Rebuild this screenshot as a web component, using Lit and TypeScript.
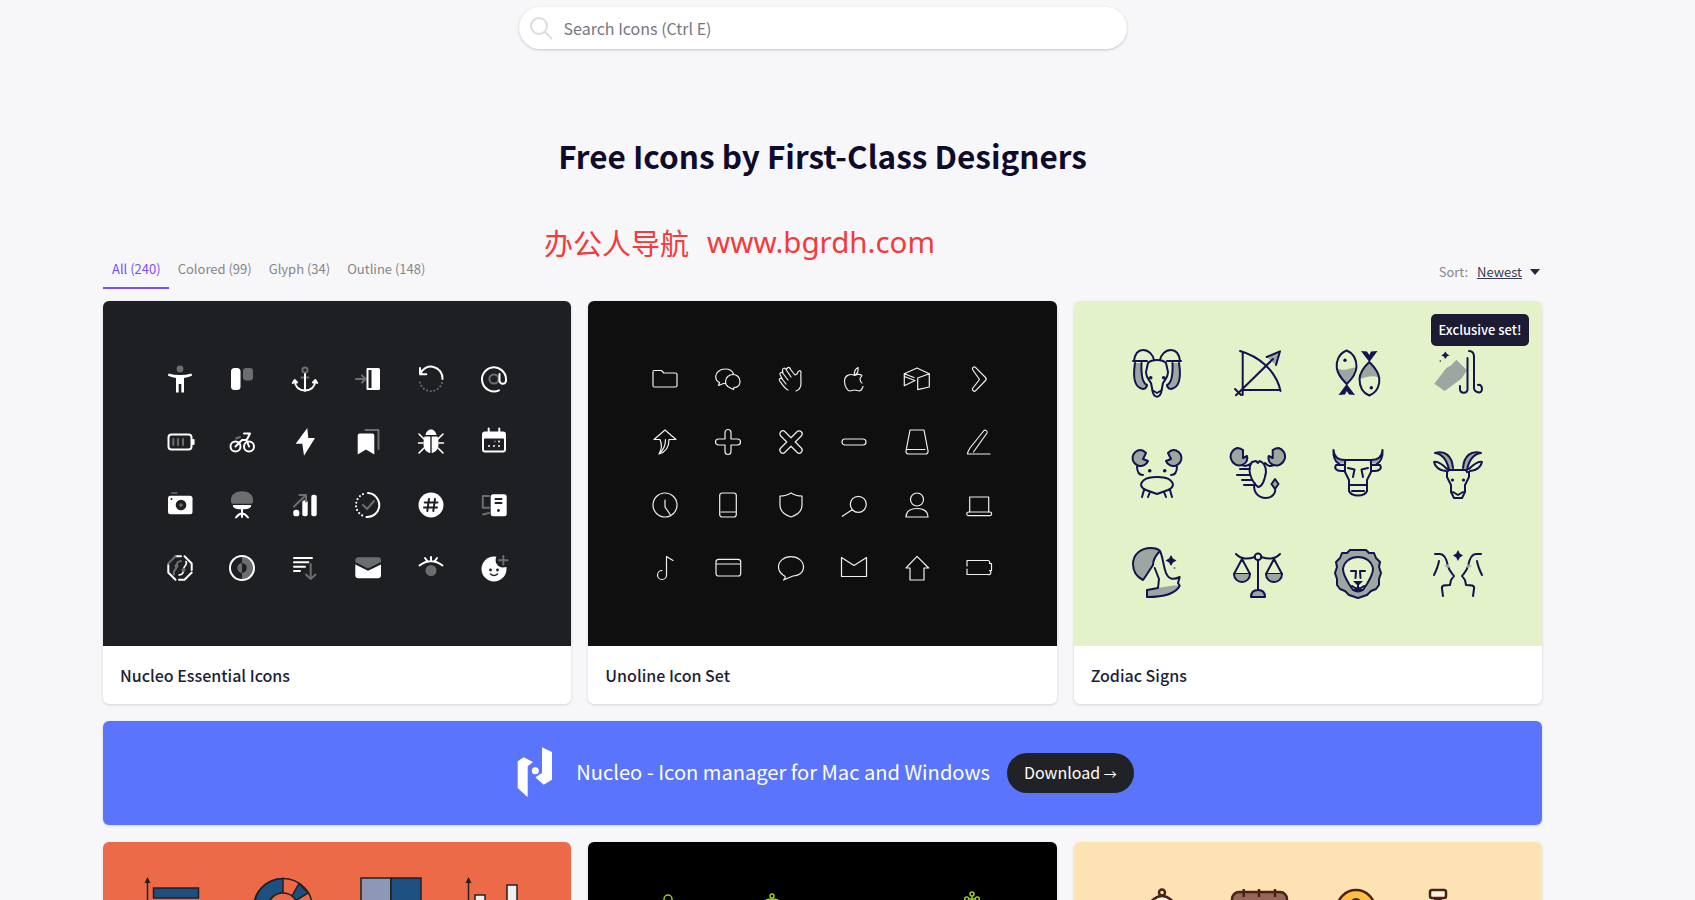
import { LitElement, html, css, svg } from "lit";
import { customElement } from "lit/decorators.js";

const essential = [
  svg`<circle class="gf" cx="13" cy="3" r="3.4"/><path class="wf" d="M1.5 7.5Q13 10.5 24.5 7.5L25 9.8Q20 11.8 17 12V26.5H14.3V18H11.7V26.5H9V12Q6 11.8 1 9.8Z"/>`,
  svg`<rect class="wf" x="2" y="2" width="9.5" height="22" rx="3.5"/><rect class="gf" x="14" y="2" width="10" height="12.5" rx="3"/>`,
  svg`<circle class="gs" cx="13" cy="4" r="2.6"/><path class="gs" d="M9.5 11.5H16.5"/><path class="ws" d="M13 8V25M2.7 15Q3.5 24 13 24.5Q22.5 24 23.3 15M.8 17L2.7 14L5 16.5M25.2 17L23.3 14L21 16.5"/>`,
  svg`<path class="gs" d="M1 13H10M7 9.5L10.5 13L7 16.5"/><rect class="wf" x="16.5" y="2" width="8.5" height="22" rx="1.5"/><path class="ws" d="M17 3H12.5V23H17" />`,
  svg`<path class="ws" d="M2.3 8A11.5 11.5 0 0 1 24.5 13M2 2V8.3H8.3"/><path class="gs dots" d="M24 17A11.5 11.5 0 0 1 1.5 13.5"/>`,
  svg`<circle class="gs" cx="13" cy="13" r="4.6"/><path class="ws" d="M18 24.3A12 12 0 1 1 25 13V14.5A3 3 0 0 1 18.5 14.5V8"/>`,
  svg`<rect class="ws" x="1.5" y="5.5" width="23" height="15" rx="3"/><rect class="wf" x="25" y="10" width="2.6" height="6" rx="1"/><path class="gs" d="M6.3 10V16M11 10V16M16 10V16"/>`,
  svg`<circle class="ws" cx="6.5" cy="17.5" r="5"/><circle class="ws" cx="20" cy="17.5" r="5"/><path class="ws" d="M6.5 17.5L13 11H17.5L20 17.5M15 4.5H21L18.5 9.5L17 11"/><path class="gs" d="M7 9.5L11 8"/>`,
  svg`<path class="wf" d="M15.3 -1L3.7 14.7H10.3L12 26.7L23 9H16.3Z"/>`,
  svg`<path class="wf" d="M2.7 6.5A2 2 0 0 1 4.7 4.5H17.3A2 2 0 0 1 19.3 6.5V25.5L11 20.5L2.7 25.5Z"/><path class="gs" d="M10.5 1H23.5V20"/>`,
  svg`<path class="wf" d="M13 .5C16 .5 18 3 18.5 6H7.5C8 3 10 .5 13 .5ZM6.5 7.5H12.3V24C8.5 23.5 5.5 20 5.5 15C5.5 12 5.8 9.5 6.5 7.5ZM13.7 7.5H19.5C20.2 9.5 20.5 12 20.5 15C20.5 20 17.5 23.5 13.7 24Z"/><path class="ws thin" d="M1 5L6 10M.5 14H5M1 24L6 19M25 5L20 10M25.5 14H21M25 24L20 19"/>`,
  svg`<path class="wf" d="M4 2.5H22A3 3 0 0 1 25 5.5V20.5A3 3 0 0 1 22 23.5H4A3 3 0 0 1 1 20.5V5.5A3 3 0 0 1 4 2.5Z"/><rect class="bf" x="3" y="9.5" width="20" height="12" rx="1"/><path class="ws" d="M7.7 -.5V3M18.3 -.5V3"/><circle class="gf" cx="14" cy="12.5" r="1"/><circle class="wf" cx="18" cy="12.5" r="1"/><circle class="wf" cx="8" cy="17" r="1"/><circle class="wf" cx="13" cy="17" r="1"/><circle class="wf" cx="18" cy="17" r="1"/>`,
  svg`<rect class="gf" x="4.3" y=".3" width="6" height="1.4"/><rect class="wf" x="1" y="3.8" width="24.5" height="18.5" rx="2.5"/><circle class="bf" cx="14" cy="13" r="5.3"/><circle class="gf" cx="14" cy="13" r="1.8"/><circle class="bf" cx="4.5" cy="7" r="1"/>`,
  svg`<path class="gf" d="M2 10V7.5C2 2.5 7 -.7 13 -.7S24 2.5 24 7.5V10Q24 11.7 22 11.7H4Q2 11.7 2 10Z"/><path class="wf" d="M4.5 13H21.5Q22.5 13 22 14.5Q20 17.3 16 17.3H10Q6 17.3 4 14.5Q3.500 13 4.500 13Z"/><path class="ws" d="M13 17V25M7 25.5Q10 21.500 13 21.500Q16 21.500 19 25.500"/>`,
  svg`<rect class="wf" x="1.3" y="17.7" width="6" height="6.600" rx="2.600"/><rect class="wf" x="10.300" y="8.300" width="5.400" height="16" rx="2"/><rect class="wf" x="19.300" y="2.700" width="5.400" height="21.600" rx="2"/><path class="gs" d="M2 14.500L13.500 3.500M7.500 3H14V9.500"/>`,
  svg`<path class="ws" d="M13 1A12 12 0 0 1 11.500 25"/><path class="ws dots w" d="M8 2.100A12 12 0 0 0 8 23.900"/><path class="gs" d="M8 13L12 17L19 9"/>`,
  svg`<circle class="wf" cx="13" cy="13" r="12.500"/><path class="bs" d="M11 7L9.300 19M17 7L15.300 19M6.700 10.500H19.500M6 15.500H19"/>`,
  svg`<path class="gs" d="M8 4H1.800V15.700H8M2 22.500L8 21"/><rect class="wf" x="9.700" y="2.300" width="16" height="22" rx="2.500"/><path class="bs" d="M14.500 7H20.500M14.500 11H20.500"/><circle class="bf" cx="17.500" cy="18.500" r="1.400"/>`,
  svg`<path class="ws" d="M17.500 1.300L24.700 8.500V15M8.500 1.300H14M1.300 10V17.500L8.500 24.700M12 24.700H17.500L24.700 17.500"/><path class="gs" d="M8.500 1.300L1.300 8.500"/><path class="gs" d="M7 19.500C5 16 9 15.500 9.500 12S9.500 6.500 14 6"/><path class="ws thin" d="M19 6.500C21 10 17 10.500 16.500 14S16.500 19.500 12 20"/><circle class="gf" cx="16.500" cy="15" r="2"/><circle class="gf" cx="9.500" cy="11" r="2"/>`,
  svg`<path class="gf" d="M13 1A12 12 0 0 1 13 25Z"/><circle class="bf" cx="13" cy="13" r="4.800"/><path class="gf" d="M13 8.200A4.800 4.800 0 0 0 13 17.800Z"/><circle class="ws" cx="13" cy="13" r="12"/>`,
  svg`<path class="ws" d="M2 3H20M2 7.300H16.300M2 11.700H13M2 16H8"/><path class="gs" d="M18.700 9V24M14 19.500L18.700 24L23.500 19.500"/>`,
  svg`<path class="gf" d="M.3 7V5A3 3 0 0 1 3.300 2.300H23A3 3 0 0 1 26 5V7L13 13.500Z"/><path class="wf" d="M.3 9.500L13 15.800L26 9.500V20.500A3 3 0 0 1 23 23.300H3.300A3 3 0 0 1 .3 20.500Z"/>`,
  svg`<path class="ws" d="M1.500 10.500Q13 2 24.500 10.500M7 3L9.500 6.500M13 2V5.500M19 3L16.500 6.500"/><circle class="gf" cx="13" cy="15.500" r="5.500"/>`,
  svg`<circle class="wf" cx="13" cy="14" r="12.500"/><circle class="bf" cx="22" cy="5" r="7.500"/><path class="gs" d="M22.300 1V9.500M18 5.200H26.500"/><circle class="bf" cx="9.500" cy="15" r="1.400"/><circle class="bf" cx="16.500" cy="15" r="1.400"/><path class="bs thin" d="M9.500 19Q13 22 16.500 19"/>`,
];

const uno = [
  svg`<path d="M1 6Q1 4.500 2.500 4.500H9.500L11.800 7H23.500Q25 7 25 8.500V19.500Q25 21 23.500 21H2.500Q1 21 1 19.500Z"/>`,
  svg`<path d="M4.500 16.500C2 15.500 .7 13.500 .7 10.500C.7 6.500 5 3 10 3C14 3 17.500 5 18.500 8"/><path d="M4.500 16.500L3.500 19.500L8.500 17.500H10.500M14.500 21.500L18.500 23.500L19 21.500C23 21.500 25 19 25 15.500C25 11.500 22 8.500 18 8.500C14 8.500 10.500 11.500 10.500 15.500C10.500 18.500 12 20.500 14.500 21.500Z"/>`,
  svg`<path d="M10 24C7 23 4 18 1.500 14.500C.5 12.500 3 11.500 4.500 13.500L2 8.500C1.500 6.500 4 5.500 5 7.500L4.500 4C4.500 2 7 1.500 8 3.500L10 1.500C12 1 12.500 3 13 4L17 9L19 8C20 4 23 4 23 6C22.500 10 23 13 23 17C23 21 21 24 18 25M5 7.500L10 14M8 3.500L13 11M4.500 13.500L8 18"/>`,
  svg`<path d="M21 9.500C19 8 16.500 8 13.500 9.500C10 7.500 3.500 8.500 3.500 15.500C3.500 20 6.500 25 9 25C10.500 25 11.500 24 13.500 24C15.500 24 16.500 25 18 25C20 25 21.500 22 22 20.500M21 17C19 16 18 11.500 20.500 10.500M13.500 9C13 6 14.500 3 17 1.500C17.500 5 16.500 8 13.500 9"/>`,
  svg`<path d="M.3 7.700L13 2L25.300 7.700V21L13.700 23.700V12L25.300 7.700M.3 7.700V19.700L11 14.500L.3 10.500M.3 7.700L10 11.500"/>`,
  svg`<path d="M6.500 3.500C6 1.500 8 0 9.500 1.300L19.500 11.500C20.500 12.500 20.500 13.500 19.500 14.500L9.500 24.800C8 26 6 24.500 6.500 22.500L13.500 13.500Z"/>`,
  svg`<path d="M8 10.500H2L13 1L24 10.500H17C17 17 14 23 7 25C10 20 10 15 8 10.500ZM13.500 10.500C13.500 15 13 20 7 25"/>`,
  svg`<path d="M10 3.500A3 3 0 0 1 16 3.500V10H22.500A3 3 0 0 1 22.500 16H16V22.500A3 3 0 0 1 10 22.500V16H3.500A3 3 0 0 1 3.500 10H10Z"/>`,
  svg`<path transform="rotate(45 13 13)" d="M10 1.500A3 3 0 0 1 16 1.500V10H24.500A3 3 0 0 1 24.500 16H16V24.500A3 3 0 0 1 10 24.500V16H1.500A3 3 0 0 1 1.500 10H10Z"/>`,
  svg`<rect x="1" y="10" width="24" height="6" rx="3"/>`,
  svg`<path d="M6 1H20L24 22A2.500 2.500 0 0 1 22 25H4A2.500 2.500 0 0 1 2 22ZM3 20.500H21"/>`,
  svg`<path d="M1.500 24.500C2 22 3 20.500 4 19L18 1.500C19 .5 22 2 21 4L7.500 23M1.500 25H24"/>`,
  svg`<circle cx="13" cy="13" r="12"/><path d="M13 8V15L18.500 23"/>`,
  svg`<rect x="4.700" y="1" width="16.600" height="24" rx="2.500"/><path d="M6 20H21"/>`,
  svg`<path d="M13 1C16 3 20 4 24 4V13C24 19 19 23 13 25C7 23 2 19 2 13V4C6 4 10 3 13 1Z"/>`,
  svg`<circle cx="17.300" cy="12.300" r="8"/><path d="M1.300 24.300L10 18.500H12.500"/>`,
  svg`<circle cx="13" cy="7.500" r="6.500"/><path d="M2 25C2 19 7 16.500 13 16.500C19 16.500 24 19 24 25Z"/>`,
  svg`<path d="M3.700 20V5H22.700V20"/><rect x=".7" y="20" width="25" height="3.600" rx="1.800"/>`,
  svg`<path d="M14.500 1.500V20A4.500 4.500 0 1 1 10 15.500M14.500 1.500L21 5.500"/>`,
  svg`<rect x="1" y="4.300" width="24.700" height="16.700" rx="2.500"/><path d="M1.500 9H25.500"/>`,
  svg`<path d="M5 20C1 17 .5 14 .5 12C.5 6 6 1.700 13 1.700C20 1.700 25.500 6 25.500 12C25.500 18 20 21 15 21L5.500 25C8 23 8 21.500 5 20Z"/>`,
  svg`<path d="M.5 2.500V21.500H25.500V2.500L13 10.500Z"/>`,
  svg`<path d="M13 1.300L24.700 13H20V25H6V13H2Z"/>`,
  svg`<path d="M1 5.500H22A2 2 0 0 1 23.500 8.500H25.500V15.500H23.500A2 2 0 0 1 22 19.500H1V14M1 11V5.500"/>`,
];

const z = [
  svg`<path class="zg" d="M3 15C0 34 5 40 11 41C14 41 15 38 15 37C10 35 9 27 9.500 15ZM47 15C50 34 45 40 39 41C36 41 35 38 35 37C40 35 41 27 40.500 15Z"/><path d="M1 13H15M35 13H49M2 13C3 5 7 2 11 2C17 2 21 7 22 12M48 13C47 5 43 2 39 2C33 2 29 7 28 12M3 15C0 34 5 40 11 41C14 41 15 38 15 37C10 35 9 27 9.500 15M47 15C50 34 45 40 39 41C36 41 35 38 35 37C40 35 41 27 40.500 15M16 15C20 11 30 11 34 15L36 24C36 29 33 32 31 35L29 45C27 50 23 50 21 45L19 35C17 32 14 29 14 24ZM20 42L25 45L30 42"/><circle class="zf" cx="18.700" cy="29.700" r="1.800"/><circle class="zf" cx="31.700" cy="29.700" r="1.800"/>`,
  svg`<path class="zg" d="M33.700 9L47 3.300L43 17Z"/><path d="M7 3C25 8 43 22 47.500 43M9.700 4V47M9.700 42H47M3 47.300L40 11M33.700 9L47 3.300L43 17M2 41L8 47"/>`,
  svg`<path class="zg" d="M3.800 20C10 24 18 20 23.500 19C23 27 18 32 13.700 36C10 32 5 28 3.800 20ZM46.200 30C40 26 32 30 26.500 31C27 23 32 18 36.300 14C40 18 45 22 46.200 30Z"/><path d="M13.700 2.500C5 6 3 14 3.800 20C5 28 10 32 13.700 36C18 32 23 27 23.500 19C23.500 11 20 5 13.700 2.500ZM36.300 47.500C45 44 47 36 46.200 30C45 22 40 18 36.300 14C32 18 27 23 26.500 31C26.500 39 30 45 36.300 47.500Z"/><path class="zf" d="M13.700 36L5.500 47L12 46.500L13.700 43L16 46.500L22 47ZM36.300 14L44.500 3L38 3.500L36.300 7L34 3.500L28 3Z"/><circle class="zf" cx="12" cy="12.300" r="1.700"/><circle class="zf" cx="38.300" cy="39.700" r="1.700"/>`,
  svg`<path class="zg nostroke" d="M1.300 35.700L13.300 20L18 17.500L23.300 11.700L34 22.300L28.300 30.700L11.700 43Z"/><path class="zf" d="M12.300 3.500L14 6L16.500 7.300L14 8.600L12.300 11L10.700 8.600L8.200 7.300L10.700 6Z"/><circle class="zf" cx="7.300" cy="13" r=".8"/><path d="M36 3C40 3 41 6 41 9V40C41 44 49 47 49 41C49 38 47 36 45 37M34.500 10V41C34.500 46 27 46 27 41V38"/>`,
  svg`<path class="zg" d="M8.700 2A8 8 0 1 0 16 13L11 11L14 5C12 3 10 2 8.700 2ZM41.300 2A8 8 0 1 1 34 13L39 11L36 5C38 3 40 2 41.300 2Z"/><path d="M8.700 2A8 8 0 1 0 16 13L11 11L14 5C12 3 10 2 8.700 2ZM41.300 2A8 8 0 1 1 34 13L39 11L36 5C38 3 40 2 41.300 2ZM5 18C5 25 8 27 11 27M45 18C45 25 42 27 39 27M12 32C17 28 33 28 38 32C43 36 41 40 36 42L25 46L14 42C9 40 7 36 12 32ZM12 42L10 49M18 44L16 49M32 44L34 49M38 42L40 49"/><circle class="zf" cx="17.700" cy="22.700" r="1.800"/><circle class="zf" cx="32.700" cy="22.700" r="1.800"/>`,
  svg`<path class="zg" d="M4 0A8.500 8.500 0 0 0 9 17C13 16 15 12 14 8L10 10V2Q7 0 4 0ZM45.700 0A8.500 8.500 0 0 1 40.700 17C36.700 16 34.700 12 35.700 8L39.700 10V2Q42.700 0 45.700 0Z"/><path d="M4 0A8.500 8.500 0 0 0 9 17C13 16 15 12 14 8L10 10V2Q7 0 4 0ZM45.700 0A8.500 8.500 0 0 1 40.700 17C36.700 16 34.700 12 35.700 8L39.700 10V2Q42.700 0 45.700 0ZM9 17C12 19 15 18 18.500 15M40.700 17C37 19 35 18 32 15M19 14C14 20 17 32 25 39C30 39 32 30 33 24C33 18 30 14 26.500 13L25 15L23 13ZM17 21H7M16 27H4M19 32H9M22 37H11M22 35.500C19 43 25 50 33 50C39 50 43 45 42 41"/><path class="zg" d="M42 31L45.500 36L42 41L38.500 36Z"/><path d="M42 31L45.500 36L42 41L38.500 36Z"/>`,
  svg`<path class="zg" d="M.5 2C1 9 5 12 12 12L14 15L6 16C3 13 1 8 .5 2ZM49.500 2C49 9 45 12 38 12L36 15L44 16C47 13 49 8 49.500 2Z"/><path d="M.5 2C1 9 5 12 12 12H38C45 12 49 9 49.500 2M.5 2C0 8 2 14 6 16M49.500 2C50 8 48 14 44 16M12 12V24L16 32V43Q18 47.500 25 47.500Q32 47.500 34 43V32L38 24V12M12 17H3C1 20 3 23 8 23H12M38 17H47C49 20 47 23 42 23H38M15 20L21.500 21.500L20 29M35 20L28.500 21.500L30 29M16 37H34M19 43H31"/>`,
  svg`<path class="zg" d="M20 20C19 8 12 2 2 5C9 6 14 12 16 22ZM30 20C31 8 38 2 48 5C41 6 36 12 34 22Z"/><path d="M20 20C19 8 12 2 2 5C9 6 14 12 16 22M30 20C31 8 38 2 48 5C41 6 36 12 34 22M16 22H34M14 24V29L18 37V44L21 50H29L32 44V37L36 29V24H34L33 22M14 24L16 22M14 21C9 16 4 13 1 14C2 19 7 23 13 23M36 21C41 16 46 13 49 14C48 19 43 23 37 23M20 44L25 47L30 44"/><circle class="zf" cx="19.500" cy="32" r="1.600"/><circle class="zf" cx="30.500" cy="32" r="1.600"/>`,
  svg`<path class="zg" d="M11 31C5 28 1 22 1 15C1 6 8 -1 19 -1C24 -1 26 0 28 2C24 6 21 11 21 16C17 22 14 27 11 31ZM15 41L26 39C32 38 42 36 47.700 36.700C44 44 34 48 15 48Z"/><path d="M11 31C5 28 1 22 1 15C1 6 8 -1 19 -1C24 -1 26 0 28 2C24 6 21 11 21 16C17 22 14 27 11 31ZM28 2C31 8 31 16 34 24C36 29 40 32 47.700 28L46 34L47.700 36.700C44 44 34 48 15 48V41L26 39L27 30L22.700 19"/><path class="zf" d="M39 6L41 9.500L44.500 11.500L41 13.500L39 17L37 13.500L33.500 11.500L37 9.500Z"/><circle class="zf" cx="42.500" cy="19" r=".8"/>`,
  svg`<circle cx="25" cy="7.700" r="3.300"/><path d="M3 5C9 11 15 10 22 8M47 5C41 11 35 10 28 8M25 11V42M9 10L1 25H17ZM41 10L33 25H49Z"/><path class="zg" d="M1 25H17C17 30 13 33 9 33C5 33 1 30 1 25ZM33 25H49C49 30 45 33 41 33C37 33 33 30 33 25ZM18 48C18 43 21 41 25 41C29 41 32 43 32 48Z"/><path d="M1 25C1 30 5 33 9 33C13 33 17 30 17 25M33 25C33 30 37 33 41 33C45 33 49 30 49 25M18 48C18 43 21 41 25 41C29 41 32 43 32 48Z"/>`,
  svg`<path class="zg" d="M25 1L33 1L36 4L41 4L43 9L47 13L46 18L48 24L46 30L46 36L43 40L38 42L34 46L25 48L16 46L12 42L7 40L4 36L4 30L2 24L4 18L3 13L7 9L9 4L14 4L17 1Z"/><path d="M25 1L33 1L36 4L41 4L43 9L47 13L46 18L48 24L46 30L46 36L43 40L38 42L34 46L25 49L16 46L12 42L7 40L4 36L4 30L2 24L4 18L3 13L7 9L9 4L14 4L17 1Z"/><path class="lgf" d="M25 8C18 8 11 12 10 20C10 25 13 30 16 35L20 41H30L34 35C37 30 40 25 40 20C39 12 32 8 25 8Z"/><path d="M25 8C18 8 11 12 10 20C10 25 13 30 16 35L20 41H30L34 35C37 30 40 25 40 20C39 12 32 8 25 8ZM18 22H23L22.500 29M32 22H27L27.500 29M20 41Q25 44 30 41"/><path class="zf" d="M20 32H30L25 37Z"/><path d="M19 37Q25 42 31 37M25 36V39"/>`,
  svg`<path class="zf" d="M25 1L26.800 4.500L30 6.500L26.800 8.500L25 12L23.200 8.500L20 6.500L23.200 4.500Z"/><path d="M2 5H7C12 5 14 12 15 17C16 22 19 24 21 27L18 31L17 36C12 36 8 36 9 40L10 47M1 26C3 22 5 18 6 12M48 5H43C38 5 36 12 35 17C34 22 31 24 29 27L32 31L33 36C38 36 42 36 41 40L40 47M49 26C47 22 45 18 44 12"/><path class="zg nostroke" d="M11 17L16 15V19ZM39 17L34 15V19Z"/>`,
];

const orange = [
  svg`<path class="d1" d="M.500 5V60"/><path class="df" d="M-2.500 6L.500 0L3.500 6Z"/><rect class="n" x="6.500" y="11" width="45" height="10"/><rect class="n" x="6.500" y="32" width="30" height="10"/>`,
  svg`<circle class="or" cx="29" cy="31" r="29.500"/><path class="n" d="M29 1.500A29.500 29.500 0 1 0 52 50L40 41A15 15 0 1 1 29 16Z"/><path class="n" d="M45 6.500L54 16L41 24L38 19Z" /><circle class="or" cx="29" cy="31" r="15"/>`,
  svg`<rect class="lb" x="0" y="1" width="30" height="60"/><rect class="n" x="30" y="1" width="30" height="60"/>`,
  svg`<path class="d1" d="M1.500 5V60"/><path class="df" d="M-1.500 6L1.500 0L4.500 6Z"/><rect class="wb" x="8" y="18" width="10" height="42"/><rect class="wb" x="40" y="8" width="10" height="52"/>`,
];

const lime = [
  svg`<circle class="l" cx="26" cy="9" r="4"/><path class="l" d="M26 13V30"/>`,
  svg`<circle class="l" cx="30" cy="6" r="2"/><path class="l" d="M24 10Q30 8 36 10M30 8V30"/>`,
  svg``,
  svg`<circle class="l" cx="30" cy="4" r="2"/><circle class="l" cx="24.700" cy="9" r="2"/><circle class="l" cx="35.300" cy="9" r="2"/><path class="l" d="M30 6V30M26.500 9H33.500"/>`,
];

const peach = [
  svg`<path class="bcream" d="M10 25Q30 -11 50 25Z"/><circle class="bb" cx="30" cy="3.500" r="3"/>`,
  svg`<rect class="bmid" x="3" y="3" width="55" height="50" rx="7"/><path class="bb" d="M14.700 0V8M30 0V8M46 0V8"/>`,
  svg`<circle class="bgold" cx="30" cy="20" r="19"/><circle class="bdot" cx="30" cy="15" r="6"/>`,
  svg`<rect class="bcream" x="7" y="1" width="16" height="8" rx="2"/><rect class="bdot" x="11" y="9" width="8" height="20"/>`,
];

const watermark = "\u529e\u516c\u4eba\u5bfc\u822a";

@customElement("app-root")
export class AppRoot extends LitElement {
  static styles = css`
    :host {
      display: block;
      position: relative;
      height: 900px;
      overflow: hidden;
      background: #f7f7fa;
      font-family: "Noto Sans CJK SC", "Noto Sans", sans-serif;
      color: #100c2e;
    }
    .page { width: 1439px; padding: 0 103px; }
    .search {
      display: flex; align-items: center; gap: 11px;
      box-sizing: border-box; width: 608px; height: 42px;
      margin: 7px auto 0; padding: 0 0 0 11px;
      background: #fff; border-radius: 21px;
      box-shadow: 0 1px 3px rgba(0, 0, 0, 0.2);
      font-size: 16px; color: #76767f;
    }
    .search svg { width: 23px; height: 23px; fill: none; stroke: #dcdcdc; stroke-width: 2; }
    h1 {
      margin: 84px 0 0; height: 44px; line-height: 44px;
      text-align: center; font-size: 31.5px; font-weight: 700; color: #0f0b2d;
    }
    .bar { display: flex; justify-content: space-between; align-items: flex-end; margin: 75px 0 12px; }
    .tabs { display: flex; }
    .tab {
      padding: 7px 8px 8px 9px; line-height: 20px; font-size: 13px; color: #85858c;
      border-bottom: 2px solid transparent;
    }
    .tab.on { color: #7c4dff; border-bottom-color: #7c4dff; }
    .sort { display: flex; align-items: center; padding: 0 2px 7px 0; font-size: 13px; line-height: 20px; color: #85858c; }
    .sort u { margin-left: 9px; color: #3b3a55; }
    .tri { width: 0; height: 0; margin-left: 8px; border: 5px solid transparent; border-top: 6px solid #262440; border-bottom: 0; }
    .grid { display: grid; grid-template-columns: repeat(3, 1fr); gap: 17px; }
    .card {
      position: relative; background: #fff; border-radius: 6px; overflow: hidden;
      box-shadow: 0 1px 3px rgba(0, 0, 0, 0.14);
    }
    .img { height: 345px; display: flex; justify-content: center; align-items: center; }
    .label { height: 58px; line-height: 58px; padding: 0 17px; font-size: 16px; font-weight: 500; color: #201d36; }
    .badge {
      position: absolute; top: 13px; right: 13px; width: 98px; height: 32px; line-height: 32px;
      text-align: center; border-radius: 5px; background: #1d1a33; color: #fff; font-size: 13px; font-weight: 500;
    }
    .icons { display: grid; justify-items: center; align-items: center; }
    .six { grid-template-columns: repeat(6, 62.8px); grid-auto-rows: 62.8px; }
    .six svg { width: 26px; height: 26px; overflow: visible; }
    .four { grid-template-columns: repeat(4, 100.3px); grid-auto-rows: 100.3px; }
    .four svg { width: 50px; height: 50px; overflow: visible; }

    .ess { background: #1e1f22; padding-right: 1px; }
    .unoline { background: #0f0f10; }
    .zod { background: #e3f2c8; }
    .org { background: #ec6a47; align-items: flex-start; padding-top: 35px; height: 310px; }
    .blk { background: #000; align-items: flex-start; padding-top: 48px; height: 297px; }
    .pch { background: #fde2b3; align-items: flex-start; padding-top: 47px; height: 298px; }
    .row { display: grid; justify-items: center; }
    .row svg { width: 60px; height: 60px; overflow: visible; }
    .org .row { grid-template-columns: repeat(4, 106.7px); }
    .blk .row { grid-template-columns: repeat(4, 100px); }
    .pch .row { grid-template-columns: repeat(4, 97px); }

    .wf { fill: #fff; }
    .gf { fill: #6b6e6f; }
    .bf { fill: #1e1f22; }
    .ws, .gs, .bs { fill: none; stroke-width: 2; stroke-linecap: round; stroke-linejoin: round; }
    .ws { stroke: #fff; }
    .gs { stroke: #6b6e6f; }
    .bs { stroke: #1e1f22; }
    .thin { stroke-width: 1.6; }
    .dots { stroke-dasharray: 0.1 3.6; }
    .dots.w { stroke: #fff; }

    .uline { fill: none; stroke: #f0f0f0; stroke-width: 1.2; stroke-linejoin: round; stroke-linecap: round; }
    .zline { fill: none; stroke: #14124f; stroke-width: 2; stroke-linejoin: round; stroke-linecap: round; }
    .zline .zg { fill: #9da6a0; stroke: none; }
    .zline .zf { fill: #14124f; stroke: none; }
    .zline .lgf { fill: #e3f2c8; stroke: none; }
    .zline .nostroke { stroke: none; }

    .d1 { fill: none; stroke: #222; stroke-width: 1.500; }
    .df { fill: #222; }
    .n { fill: #1d4f80; stroke: #222; stroke-width: 1.500; }
    .or { fill: #ec6a47; stroke: #222; stroke-width: 1.500; }
    .lb { fill: #8c98b5; stroke: #222; stroke-width: 1.500; }
    .wb { fill: #eee; stroke: #222; stroke-width: 1.500; }
    .l { fill: none; stroke: #9dcc14; stroke-width: 1.500; }
    .bb { fill: none; stroke: #4a2318; stroke-width: 2.500; }
    .bcream { fill: #fff5e0; stroke: #4a2318; stroke-width: 2.500; }
    .bmid { fill: #96665a; stroke: #4a2318; stroke-width: 2.500; }
    .bgold { fill: #ffbe44; stroke: #4a2318; stroke-width: 2.500; }
    .bdot { fill: #4a2318; }

    .banner {
      grid-column: 1 / -1; height: 104px; border-radius: 6px; background: #5a75fb;
      display: flex; align-items: center; justify-content: center; color: #fff;
      box-shadow: 0 1px 3px rgba(0, 0, 0, 0.14);
      padding-left: 6px;
    }
    .logo { width: 36px; height: 52px; margin-right: 23px; fill: #fff; }
    .btext { font-size: 20.1px; font-weight: 400; line-height: 30px; padding-bottom: 2px; }
    .btn {
      margin-left: 17px; padding: 0 17px; height: 40px; line-height: 38px; border-radius: 20px;
      background: #212225; font-size: 16px; font-weight: 400;
    }
    .arrow { font-size: 13px; }
    .mark {
      position: absolute; left: 544px; top: 220px; display: flex; gap: 18px;
      font-size: 29px; line-height: 44px; color: #f43a3a; white-space: nowrap;
    }
    .mark .en { font-family: "Noto Sans", sans-serif; font-size: 29.5px; }
  `;

  render() {
    return html`
      <div class="page">
        <div class="search">
          <svg viewBox="0 0 23 23"><circle cx="9" cy="9" r="8"/><path d="M15 15L22 22"/></svg>
          <span>Search Icons (Ctrl E)</span>
        </div>
        <h1>Free Icons by First-Class Designers</h1>
        <div class="bar">
          <div class="tabs">
            <div class="tab on">All (240)</div>
            <div class="tab">Colored (99)</div>
            <div class="tab">Glyph (34)</div>
            <div class="tab">Outline (148)</div>
          </div>
          <div class="sort">Sort:<u>Newest</u><span class="tri"></span></div>
        </div>
        <div class="grid">
          <div class="card">
            <div class="img ess"><div class="icons six">${essential.map((i) => html`<svg viewBox="0 0 26 26">${i}</svg>`)}</div></div>
            <div class="label">Nucleo Essential Icons</div>
          </div>
          <div class="card">
            <div class="img unoline"><div class="icons six">${uno.map((i) => html`<svg class="uline" viewBox="0 0 26 26">${i}</svg>`)}</div></div>
            <div class="label">Unoline Icon Set</div>
          </div>
          <div class="card">
            <div class="img zod"><div class="icons four">${z.map((i) => html`<svg class="zline" viewBox="0 0 50 50">${i}</svg>`)}</div></div>
            <div class="label">Zodiac Signs</div>
            <div class="badge">Exclusive set!</div>
          </div>
          <div class="banner">
            <svg class="logo" viewBox="10 9 36 52">
              <path d="M35 9.300L45 14V41.700L36.700 46.700L28.300 39.300L35 35Z"/>
              <path d="M10.700 23.300L16.700 19.300L26 24L20.700 28.300V59.300L10.700 50Z"/>
              <circle cx="28.300" cy="32.700" r="3.500"/>
            </svg>
            <span class="btext">Nucleo - Icon manager for Mac and Windows</span>
            <span class="btn">Download <span class="arrow">→</span></span>
          </div>
          <div class="card"><div class="img org"><div class="row">${orange.map((i) => html`<svg viewBox="0 0 60 60">${i}</svg>`)}</div></div></div>
          <div class="card"><div class="img blk"><div class="row">${lime.map((i) => html`<svg viewBox="0 0 60 60">${i}</svg>`)}</div></div></div>
          <div class="card"><div class="img pch"><div class="row">${peach.map((i) => html`<svg viewBox="0 0 60 60">${i}</svg>`)}</div></div></div>
        </div>
      </div>
      <div class="mark"><span>${watermark}</span><span class="en">www.bgrdh.com</span></div>
    `;
  }
}
